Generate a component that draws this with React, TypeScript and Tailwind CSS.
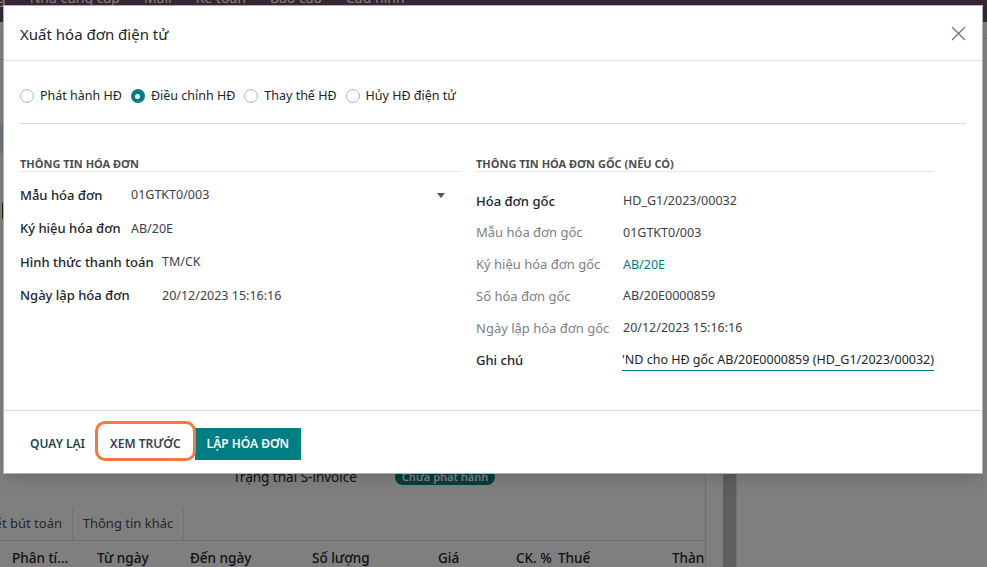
const navItems = ["g", "Nhà cung cấp", "Mail", "Kế toán", "Báo cáo", "Cấu hình"];

const leftRows = [
  { label: "Mẫu hóa đơn", value: "01GTKT0/003", labelW: "w-[111px]", select: true },
  { label: "Ký hiệu hóa đơn", value: "AB/20E", labelW: "w-[111px]" },
  { label: "Hình thức thanh toán", value: "TM/CK", labelW: "w-[142px]" },
  { label: "Ngày lập hóa đơn", value: "20/12/2023 15:16:16", labelW: "w-[142px]" },
];

const tableCols = [
  { t: "Phân tí...", w: "w-[85px]" },
  { t: "Từ ngày", w: "w-[93px]" },
  { t: "Đến ngày", w: "w-[122px]" },
  { t: "Số lượng", w: "w-[126px]" },
  { t: "Giá", w: "w-[78px]" },
  { t: "CK. %", w: "w-[42px]" },
  { t: "Thuế", w: "w-[114px]" },
  { t: "Thành", w: "w-[60px]" },
];

function Radio({ label, checked }: { label: string; checked?: boolean }) {
  return (
    <label className="flex items-center gap-[6px]">
      {checked ? (
        <span className="flex h-[14px] w-[14px] items-center justify-center rounded-full bg-[#017e84]">
          <span className="h-[5px] w-[5px] rounded-full bg-white" />
        </span>
      ) : (
        <span className="h-[14px] w-[14px] rounded-full border border-[#adb5bd] bg-white" />
      )}
      <span className="text-[12.5px] text-[#212529]">{label}</span>
    </label>
  );
}

function SectionTitle({ children }: { children: string }) {
  return (
    <div className="h-[17px] border-b border-[#e5e7eb] pt-[2px] text-[11px] leading-[14px] font-bold text-[#4b4f54] uppercase">
      {children}
    </div>
  );
}

function PageBehind() {
  return (
    <div className="flex h-full flex-col">
      <div className="flex h-[22px] shrink-0 bg-[#714b67] text-[14px] leading-[20px] text-white">
        <div className="-mt-[12px] flex gap-[24px]">
          {navItems.map((n, i) => (
            <span key={n} className={i === 0 ? "-ml-[3px] underline" : ""}>
              {n}
            </span>
          ))}
        </div>
      </div>
      <div className="flex flex-1">
        <div className="flex w-[706px] flex-col border-r border-[#d8dadd]">
          <div className="h-[38px] border-b border-[#dee2e6]" />
          <div className="mt-[65px] h-[28px] w-[30px] bg-[#d9e8f0]" />
          <div className="mt-[48px] ml-[2px] h-[20px] w-[8px] rounded-full bg-[#5c3b10]" />
          <div className="h-[248px]" />
          <div className="flex h-[16px] items-center">
            <span className="ml-[233px] text-[13.5px] text-[#212529]">Trạng thái S-invoice</span>
            <span className="ml-[38px] rounded-full bg-[#017e84] px-[7px] text-[11px] leading-[16px] font-semibold text-white">
              Chưa phát hành
            </span>
          </div>
          <div className="mt-[23px] flex h-[33px] border-b border-[#dee2e6] text-[13px] text-[#495057]">
            <div className="flex w-[73px] items-center justify-end border-r border-[#dee2e6] pr-[10px] whitespace-nowrap">
              ết bút toán
            </div>
            <div className="flex w-[111px] items-center justify-center border-r border-[#dee2e6]">Thông tin khác</div>
          </div>
          <div className="flex h-[34px] items-center overflow-hidden pl-[12px] text-[13.5px] font-medium whitespace-nowrap text-[#212529]">
            {tableCols.map((c) => (
              <span key={c.t} className={`${c.w} shrink-0`}>
                {c.t}
              </span>
            ))}
          </div>
        </div>
        <div className="w-[17px] bg-white" />
        <div className="w-[13px] bg-[#bdbdbd]" />
        <div className="flex-1 border-l border-[#dee2e6] bg-white pt-[16px]">
          <div className="h-px bg-[#dee2e6]" />
        </div>
      </div>
    </div>
  );
}

export default function App() {
  return (
    <div className="relative h-[567px] w-[987px] overflow-hidden bg-white font-['Noto_Sans',sans-serif]">
      <PageBehind />
      <div className="absolute inset-0 bg-black/50" />

      <div className="absolute top-[5px] left-[3px] flex h-[469px] w-[980px] flex-col border border-black/30 bg-white shadow-lg">
        <div className="flex h-[55px] shrink-0 items-center justify-between border-b border-[#dee2e6] pt-[2px] pr-[16px] pl-[16px]">
          <h4 className="text-[15px] text-[#212529]">Xuất hóa đơn điện tử</h4>
          <svg width="15" height="15" viewBox="0 0 15 15" className="mb-[2px]">
            <path d="M1 1l13 13M14 1L1 14" stroke="#6c757d" strokeWidth="1.3" fill="none" />
          </svg>
        </div>

        <div className="flex-1 px-[16px]">
          <div className="mt-[25px] flex h-[20px] items-center gap-[9px]">
            <Radio label="Phát hành HĐ" />
            <Radio label="Điều chỉnh HĐ" checked />
            <Radio label="Thay thế HĐ" />
            <Radio label="Hủy HĐ điện tử" />
          </div>
          <div className="mt-[17px] h-px bg-[#d8dadd]" />

          <div className="mt-[31px] flex">
            <div className="w-[441px]">
              <SectionTitle>Thông tin hóa đơn</SectionTitle>
              <div className="mt-[5px]">
                {leftRows.map((r) => (
                  <div key={r.label} className="flex h-[33.6px] items-center pt-[3px]">
                    <span className={`${r.labelW} shrink-0 text-[13px] font-medium text-[#212529]`}>{r.label}</span>
                    <span className="flex-1 text-[12.5px] text-[#3b4148]">{r.value}</span>
                    {r.select && (
                      <svg width="8" height="5" viewBox="0 0 8 5" className="mr-[16px]">
                        <path d="M0 0h8L4 5z" fill="#4b5563" />
                      </svg>
                    )}
                  </div>
                ))}
              </div>
            </div>

            <div className="ml-[15px] w-[458px]">
              <SectionTitle>Thông tin hóa đơn gốc (nếu có)</SectionTitle>
              <div className="mt-[12px] text-[13px]">
                <div className="flex h-[31.8px] items-center pt-[3px]">
                  <span className="w-[147px] shrink-0 font-medium text-[#212529]">Hóa đơn gốc</span>
                  <span className="text-[12.5px] text-[#3b4148]">HD_G1/2023/00032</span>
                </div>
                <div className="flex h-[31.8px] items-center pt-[3px]">
                  <span className="w-[147px] shrink-0 text-[#7b8085]">Mẫu hóa đơn gốc</span>
                  <span className="text-[12.5px] text-[#3b4148]">01GTKT0/003</span>
                </div>
                <div className="flex h-[31.8px] items-center pt-[3px]">
                  <span className="w-[147px] shrink-0 text-[#7b8085]">Ký hiệu hóa đơn gốc</span>
                  <span className="text-[12.5px] text-[#017e84]">AB/20E</span>
                </div>
                <div className="flex h-[31.8px] items-center pt-[3px]">
                  <span className="w-[147px] shrink-0 text-[#7b8085]">Số hóa đơn gốc</span>
                  <span className="text-[12.5px] text-[#3b4148]">AB/20E0000859</span>
                </div>
                <div className="flex h-[31.8px] items-center pt-[3px]">
                  <span className="w-[147px] shrink-0 text-[#7b8085]">Ngày lập hóa đơn gốc</span>
                  <span className="text-[12.5px] text-[#3b4148]">20/12/2023 15:16:16</span>
                </div>
                <div className="flex h-[31.8px] items-center pt-[3px]">
                  <span className="w-[146px] shrink-0 font-medium text-[#212529]">Ghi chú</span>
                  <div className="flex h-[22px] flex-1 items-center justify-end overflow-hidden border-b border-[#017e84] whitespace-nowrap text-[12.5px] text-[#212529]">
                    'ND cho HĐ gốc AB/20E0000859 (HD_G1/2023/00032)
                  </div>
                </div>
              </div>
            </div>
          </div>
        </div>

        <div className="flex h-[63px] shrink-0 items-center border-t border-[#d8dadd] px-[16px] pt-[4px] text-[12px] font-semibold">
          <button className="h-[32px] px-[10px] text-[#1d4552] uppercase">Quay lại</button>
          <button className="relative ml-[1px] h-[32px] px-[14px] text-[#374151] uppercase">
            Xem trước
            <span className="absolute -inset-x-[1px] -top-[7px] -bottom-[1px] rounded-[10px] border-[3px] border-[#f9773f]" />
          </button>
          <button className="h-[32px] bg-[#017e84] px-[12px] text-white uppercase">Lập hóa đơn</button>
        </div>
      </div>
    </div>
  );
}
